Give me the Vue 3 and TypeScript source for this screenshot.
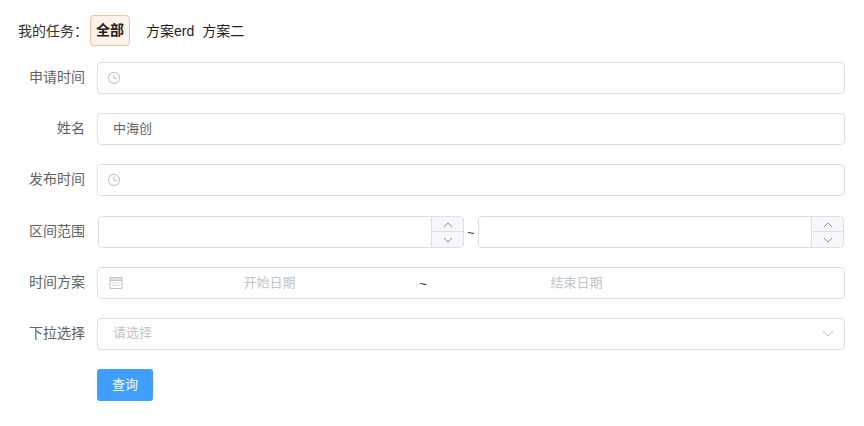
<template>
  <div class="page">
    <div class="tabs">
      <span class="tabs-title">我的任务：</span>
      <span class="tab active">全部</span>
      <span class="tab-list">
        <span v-for="t in tabs" :key="t" class="tab">{{ t }}</span>
      </span>
    </div>

    <form class="form" @submit.prevent>
      <div class="row">
        <label class="label">申请时间</label>
        <div class="field with-icon">
          <svg class="icon" viewBox="0 0 14 14"><circle cx="7" cy="7" r="5.6" /><path d="M7 3.4V7.5H10.2" /></svg>
          <input class="input" />
        </div>
      </div>

      <div class="row">
        <label class="label">姓名</label>
        <div class="field"><input class="input" value="中海创" /></div>
      </div>

      <div class="row">
        <label class="label">发布时间</label>
        <div class="field with-icon">
          <svg class="icon" viewBox="0 0 14 14"><circle cx="7" cy="7" r="5.6" /><path d="M7 3.4V7.5H10.2" /></svg>
          <input class="input" />
        </div>
      </div>

      <div class="row">
        <label class="label">区间范围</label>
        <div class="range">
          <div v-for="side in ranges" :key="side" class="number">
            <input class="input" />
            <div class="stepper">
              <span class="step">
                <svg viewBox="0 0 10 6"><path d="M1 5L5 1L9 5" /></svg>
              </span>
              <span class="step">
                <svg viewBox="0 0 10 6"><path d="M1 1L5 5L9 1" /></svg>
              </span>
            </div>
          </div>
          <span class="tilde range-tilde">~</span>
        </div>
      </div>

      <div class="row">
        <label class="label">时间方案</label>
        <div class="field dates">
          <svg class="icon cal" viewBox="0 0 14 14">
            <rect x="1" y="1.5" width="12" height="11" rx="0.5" />
            <path d="M1 4.5H13M1 3H13" />
            <path class="cal-grid" d="M3 7H11M3 9.5H11" />
          </svg>
          <input class="date-input" placeholder="开始日期" />
          <span class="tilde">~</span>
          <input class="date-input" placeholder="结束日期" />
        </div>
      </div>

      <div class="row">
        <label class="label">下拉选择</label>
        <div class="field">
          <input class="input" placeholder="请选择" />
          <svg class="arrow" viewBox="0 0 12 7"><path d="M1 1L6 6L11 1" /></svg>
        </div>
      </div>

      <div class="row">
        <span class="label"></span>
        <button class="submit" type="button">查询</button>
      </div>
    </form>
  </div>
</template>

<script setup lang="ts">
const tabs: string[] = ["方案erd", "方案二"];
const ranges: string[] = ["from", "to"];
</script>

<style>
html,
body {
  margin: 0;
  background: #fff;
}
</style>

<style scoped>
.page {
  padding: 15px 19px 0 18px;
  font-family: "Liberation Sans", "Noto Sans CJK SC", sans-serif;
  font-size: 13px;
  color: #303133;
}

.tabs {
  display: flex;
  align-items: center;
  height: 31px;
  margin-bottom: 16px;
  font-size: 14px;
}

.tabs-title {
  width: 72px;
  padding-bottom: 2px;
}

.tab {
  color: #1f2026;
  padding-bottom: 2px;
}

.tab.active {
  box-sizing: border-box;
  width: 40px;
  height: 31px;
  padding-bottom: 0;
  line-height: 29px;
  text-align: center;
  font-weight: 700;
  background: #fdf3e8;
  border: 1px solid #f5bfa5;
  border-radius: 4px;
}

.tab-list {
  display: flex;
  gap: 8px;
  margin-left: 16px;
}

.form {
  display: flex;
  flex-direction: column;
  gap: 19.2px;
}

.row {
  display: flex;
  align-items: center;
}

.label {
  box-sizing: border-box;
  flex: 0 0 79px;
  padding: 0 12px 4px 0;
  text-align: right;
  font-size: 14px;
  color: #606266;
}

.field {
  position: relative;
  flex: 1;
  box-sizing: border-box;
  display: flex;
  align-items: center;
  height: 32px;
  border: 1px solid #dcdfe6;
  border-radius: 4px;
}

.input {
  flex: 1;
  min-width: 0;
  height: 100%;
  box-sizing: border-box;
  padding: 0 15px 3px;
  border: 0;
  outline: 0;
  background: transparent;
  font: inherit;
  color: #606266;
}

.input::placeholder,
.date-input::placeholder {
  color: #c0c4cc;
}

.icon {
  width: 14px;
  height: 14px;
  flex: none;
  fill: none;
  stroke: #c0c4cc;
  stroke-width: 1.1;
}

.with-icon .icon {
  position: absolute;
  left: 9px;
  top: 8px;
}

.cal {
  margin: 0 1px 0 11px;
}

.cal-grid {
  stroke-dasharray: 1.2 0.9;
}

.dates .tilde {
  flex: none;
  width: 16px;
  padding-top: 1px;
  text-align: center;
}

.date-input {
  flex: 0 0 39%;
  min-width: 0;
  box-sizing: border-box;
  height: 100%;
  border: 0;
  outline: 0;
  background: transparent;
  padding: 0 0 1px;
  text-align: center;
  font: inherit;
}

.arrow {
  position: absolute;
  right: 10px;
  width: 12px;
  height: 7px;
  fill: none;
  stroke: #c0c4cc;
  stroke-width: 1;
}

.range {
  position: relative;
  flex: 1;
  display: flex;
  justify-content: space-between;
  padding: 0 1px;
}

.number {
  position: relative;
  box-sizing: border-box;
  display: flex;
  width: 366px;
  height: 32px;
  border: 1px solid #dcdfe6;
  border-radius: 4px;
  overflow: hidden;
}

.stepper {
  box-sizing: border-box;
  flex: 0 0 32px;
  display: flex;
  flex-direction: column;
  background: #f5f7fa;
  border-left: 1px solid #dcdfe6;
}

.step {
  flex: 1;
  display: flex;
  align-items: center;
  justify-content: center;
  padding-top: 2px;
}

.step + .step {
  border-top: 1px solid #dcdfe6;
}

.step svg {
  width: 10px;
  height: 6px;
  fill: none;
  stroke: #8f949c;
  stroke-width: 1;
}

.range-tilde {
  position: absolute;
  left: 370px;
  top: 9px;
}

.submit {
  width: 56px;
  height: 32px;
  padding: 0 0 3px;
  border: 0;
  border-radius: 3px;
  background: #409eff;
  color: #fff;
  font: inherit;
}
</style>
